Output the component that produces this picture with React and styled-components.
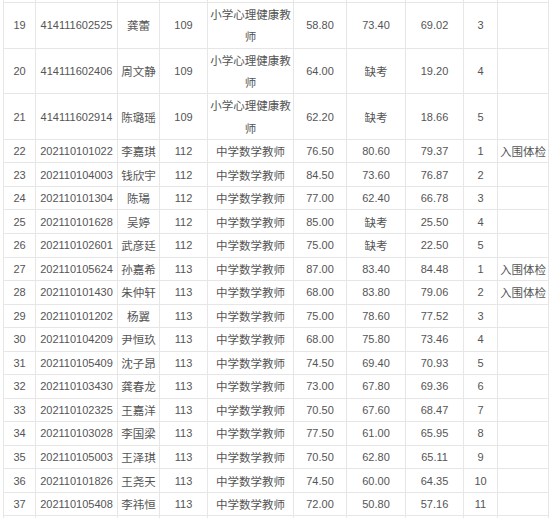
import React from "react";
import styled, { createGlobalStyle } from "styled-components";

const Global = createGlobalStyle`
  html, body { margin: 0; padding: 0; background: #fff; }
  body { font-family: "Liberation Sans", "Noto Sans CJK SC", sans-serif; }
`;

const Viewport = styled.div`
  width: 554px;
  height: 520px;
  overflow: hidden;
  padding-left: 3px;
  box-sizing: border-box;
`;

const Table = styled.table`
  table-layout: fixed;
  border-collapse: collapse;
  width: 546px;
  color: #555;
`;

const Col = styled.col`
  width: ${(p) => p.$w}px;
`;

const Td = styled.td`
  border: 1px solid #e6e6e6;
  padding: 0.23px 2px;
  text-align: center;
  vertical-align: middle;
  line-height: 22.1px;
  font-size: ${(p) => (p.$cjk ? "11.5px" : "11px")};
  font-family: ${(p) =>
    p.$cjk
      ? '"Noto Sans CJK SC", "Liberation Sans", sans-serif'
      : '"Liberation Sans", "Noto Sans CJK SC", sans-serif'};
  word-break: break-all;
`;

/* empty continuation row: the table goes on above and below the visible part */
const EdgeCell = styled.td`
  border-left: 1px solid #e6e6e6;
  border-right: 1px solid #e6e6e6;
  border-top: ${(p) => (p.$at === "top" ? "none" : "1px solid #e6e6e6")};
  border-bottom: ${(p) => (p.$at === "bottom" ? "none" : "1px solid #e6e6e6")};
  padding: 0;
  height: 2px;
  line-height: 0;
  font-size: 0;
`;

const widths = [32, 82, 42, 48, 86, 53, 59, 58, 34, 51];

const rows = [
  ["19", "414111602525", "龚蕾", "109", "小学心理健康教师", "58.80", "73.40", "69.02", "3", ""],
  ["20", "414111602406", "周文静", "109", "小学心理健康教师", "64.00", "缺考", "19.20", "4", ""],
  ["21", "414111602914", "陈璐瑶", "109", "小学心理健康教师", "62.20", "缺考", "18.66", "5", ""],
  ["22", "202110101022", "李嘉琪", "112", "中学数学教师", "76.50", "80.60", "79.37", "1", "入围体检"],
  ["23", "202110104003", "钱欣宇", "112", "中学数学教师", "84.50", "73.60", "76.87", "2", ""],
  ["24", "202110101304", "陈瑒", "112", "中学数学教师", "77.00", "62.40", "66.78", "3", ""],
  ["25", "202110101628", "吴婷", "112", "中学数学教师", "85.00", "缺考", "25.50", "4", ""],
  ["26", "202110102601", "武彦廷", "112", "中学数学教师", "75.00", "缺考", "22.50", "5", ""],
  ["27", "202110105624", "孙嘉希", "113", "中学数学教师", "87.00", "83.40", "84.48", "1", "入围体检"],
  ["28", "202110101430", "朱仲轩", "113", "中学数学教师", "68.00", "83.80", "79.06", "2", "入围体检"],
  ["29", "202110101202", "杨翼", "113", "中学数学教师", "75.00", "78.60", "77.52", "3", ""],
  ["30", "202110104209", "尹恒玖", "113", "中学数学教师", "68.00", "75.80", "73.46", "4", ""],
  ["31", "202110105409", "沈子昂", "113", "中学数学教师", "74.50", "69.40", "70.93", "5", ""],
  ["32", "202110103430", "龚春龙", "113", "中学数学教师", "73.00", "67.80", "69.36", "6", ""],
  ["33", "202110102325", "王嘉洋", "113", "中学数学教师", "70.50", "67.60", "68.47", "7", ""],
  ["34", "202110103028", "李国梁", "113", "中学数学教师", "77.50", "61.00", "65.95", "8", ""],
  ["35", "202110105003", "王泽琪", "113", "中学数学教师", "70.50", "62.80", "65.11", "9", ""],
  ["36", "202110101826", "王尧天", "113", "中学数学教师", "74.50", "60.00", "64.35", "10", ""],
  ["37", "202110105408", "李祎恒", "113", "中学数学教师", "72.00", "50.80", "57.16", "11", ""],
];

const isCjk = (s) => /[^\x00-\x7f]/.test(s);

const EdgeRow = ({ at }) => (
  <tr aria-hidden="true">
    {widths.map((_, i) => (
      <EdgeCell key={i} $at={at} />
    ))}
  </tr>
);

export default function App() {
  return (
    <>
      <Global />
      <Viewport>
        <Table>
          <colgroup>
            {widths.map((w, i) => (
              <Col key={i} $w={w} />
            ))}
          </colgroup>
          <tbody>
            <EdgeRow at="top" />
            {rows.map((r) => (
              <tr key={r[0]}>
                {r.map((c, i) => (
                  <Td key={i} $cjk={isCjk(c)}>
                    {c}
                  </Td>
                ))}
              </tr>
            ))}
            <EdgeRow at="bottom" />
          </tbody>
        </Table>
      </Viewport>
    </>
  );
}
